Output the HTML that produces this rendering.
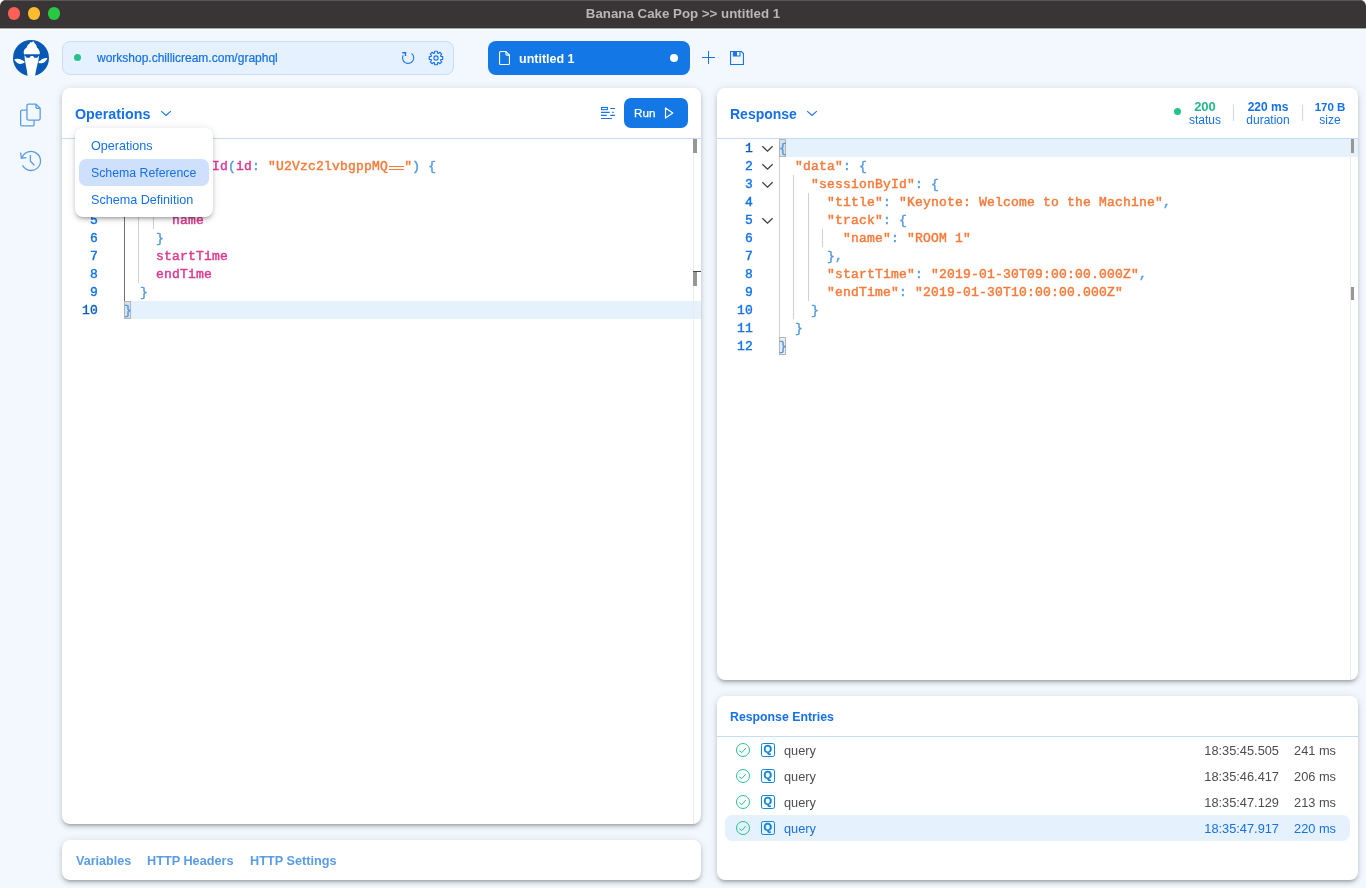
<!DOCTYPE html>
<html>
<head>
<meta charset="utf-8">
<title>Banana Cake Pop</title>
<style>
*{box-sizing:border-box;margin:0;padding:0}
html,body{width:1366px;height:888px;overflow:hidden;background:#fff}
body{font-family:"Liberation Sans",sans-serif;position:relative;color:#1670e6}
.abs{position:absolute}
#win{position:absolute;left:0;top:0;width:1366px;height:888px;background:#f3f8fe;border-radius:6px 6px 0 0;overflow:hidden}
#titlebar{position:absolute;left:0;top:0;width:1366px;height:28px;background:#393537;border-top:1px solid #5b5759}
#titlebar .t{position:absolute;left:0;width:1366px;top:5px;text-align:center;font-weight:700;font-size:13.3px;line-height:16px;color:#b9b5b8;letter-spacing:0}
.tl{position:absolute;top:6.4px;width:12.4px;height:12.4px;border-radius:50%}
#tbline{position:absolute;left:0;top:28px;width:1366px;height:2px;background:linear-gradient(#a9a7a8 0,#a9a7a8 50%,#fafcff 50%,#fafcff 100%)}
.panel{position:absolute;background:#fff;border-radius:8px;box-shadow:0 3px 3px -2px rgba(0,0,0,.2),0 3px 4px 0 rgba(0,0,0,.14),0 1px 8px 0 rgba(0,0,0,.12)}
.hline{position:absolute;height:1px;background:#c4dcfb}
.t{white-space:pre}
.t,.mono,.ln{will-change:transform}
.mono{font-family:"Liberation Mono",monospace;font-size:13px;letter-spacing:0.2px;line-height:18px;white-space:pre;font-weight:400;-webkit-text-stroke:0.45px currentColor;margin-top:0.7px;margin-left:-0.4px}
.ln{position:absolute;text-align:right;font-family:"Liberation Mono",monospace;font-size:13px;letter-spacing:0.2px;line-height:18px;font-weight:400;-webkit-text-stroke:0.38px currentColor;color:#1272e6;margin-top:0.7px}
.f{color:#dc3a90}.s{color:#f67b3b}.p{color:#589ae2}
.guide{position:absolute;width:1px;background:#d0d0d0}
</style>
</head>
<body>
<div id="win">
  <div id="titlebar">
    <div class="tl" style="left:7.8px;background:#fe5f57"></div>
    <div class="tl" style="left:27.8px;background:#febc2e"></div>
    <div class="tl" style="left:47.7px;background:#28c840"></div>
    <div class="t">Banana Cake Pop &gt;&gt; untitled 1</div>
  </div>
  <div id="tbline"></div>

  <!-- TOPBAR -->
  <div id="topbar">
    <!-- logo -->
    <svg class="abs" style="left:12px;top:39px" width="38" height="38" viewBox="0 0 38 38">
      <circle cx="19" cy="19" r="18" fill="#0659b5"/>
      <path d="M21.3 2.1 L19.9 3.5 L18.4 2.9 L17.4 4.7 C15.6 5.6 14.8 7 14.7 8.4 C12.8 9.6 11.8 11.2 11.7 13 C11.6 13.9 11.8 14.6 12.2 15.2 L27.5 15.2 C27.9 14.4 27.9 13.4 27.6 12.4 C27.1 10.8 26.2 9.4 24.9 8.4 C24.8 6.8 24.2 5.4 22.8 4.4 Z" fill="#fff"/>
      <path d="M12.4 15 L27.2 15 L26.6 20.6 C25.4 25.4 24.1 30.6 23 37.3 L19.4 37.3 L19 36.4 L18.6 37.3 L15.7 37.3 C14.9 31 13.7 25.6 12.8 20.8 Z" fill="#fff"/>
      <path d="M12.4 15.2 L27.3 15.2 L27.2 16.9 L26.4 16.9 C26.3 18.1 25.4 18.8 23.9 18.8 C22.4 18.8 21.4 18.1 21.2 16.9 L18.7 16.9 C18.5 18.1 17.6 18.8 16.1 18.8 C14.6 18.8 13.7 18.1 13.5 16.9 L12.5 16.9 Z" fill="#0659b5"/>
      <path d="M2.2 20.6 C4.4 19.4 7.6 19.6 9.8 21 L12.4 22.3 L12.6 23.6 C10.4 25 7.6 25.4 5.6 24.2 C4.2 23.3 3.1 22 2.2 20.6 Z" fill="#fff"/>
      <path d="M35.4 19.2 C33 18.8 30.2 19.8 28.4 21.4 L26.6 22.4 L26.4 23.7 C28.4 24.6 31 24.3 32.7 23 C34 22 34.9 20.7 35.4 19.2 Z" fill="#fff"/>
    </svg>
    <!-- url box -->
    <div class="abs" style="left:62px;top:41px;width:392px;height:34px;background:#e5f1fe;border:1px solid #c6ddfb;border-radius:8px"></div>
    <div class="abs" style="left:74.2px;top:54.3px;width:7.2px;height:7.2px;border-radius:50%;background:#25c28e"></div>
    <div class="abs t" style="left:97px;top:51px;font-size:12px;line-height:14px;color:#1670e6;-webkit-text-stroke:0.2px #1670e6">workshop.chillicream.com/graphql</div>
    <!-- refresh -->
    <svg class="abs" style="left:400px;top:50px" width="16" height="16" viewBox="0 0 16 16" fill="none" stroke="#1a73e8" stroke-width="1.1">
      <path d="M11.6 3.4 A5.6 5.6 0 1 1 3.2 5.2"/>
      <path d="M2.2 2.7 L5.5 2.7 L5.5 6" stroke-linejoin="miter" stroke-width="1.4"/>
    </svg>
    <!-- gear -->
    <svg class="abs" style="left:428px;top:50px" width="16" height="16" viewBox="0 0 16 16" fill="none" stroke="#1a73e8" stroke-width="1.1" id="gear"><path d="M6.49 3.13 L6.63 1.24 L9.37 1.24 L9.51 3.13 L10.38 3.49 L11.81 2.25 L13.75 4.19 L12.51 5.62 L12.87 6.49 L14.76 6.63 L14.76 9.37 L12.87 9.51 L12.51 10.38 L13.75 11.81 L11.81 13.75 L10.38 12.51 L9.51 12.87 L9.37 14.76 L6.63 14.76 L6.49 12.87 L5.62 12.51 L4.19 13.75 L2.25 11.81 L3.49 10.38 L3.13 9.51 L1.24 9.37 L1.24 6.63 L3.13 6.49 L3.49 5.62 L2.25 4.19 L4.19 2.25 L5.62 3.49 Z" stroke-linejoin="round"/><circle cx="8" cy="8" r="2.1"/></svg>
    <!-- tab -->
    <div class="abs" style="left:488px;top:41px;width:202px;height:34px;background:#1477e6;border-radius:8px"></div>
    <svg class="abs" style="left:498px;top:50px" width="14" height="16" viewBox="0 0 14 16" fill="none" stroke="#fff" stroke-width="1.1">
      <path d="M1.55 2.6 Q1.55 1.55 2.6 1.55 L7.9 1.55 L11.45 5.1 L11.45 13.4 Q11.45 14.45 10.4 14.45 L2.6 14.45 Q1.55 14.45 1.55 13.4 Z"/>
      <path d="M7.9 1.55 L7.9 4.1 Q7.9 5.1 8.9 5.1 L11.45 5.1"/>
    </svg>
    <div class="abs t" style="left:519px;top:51.8px;font-size:12.5px;line-height:15px;font-weight:700;color:#fff">untitled 1</div>
    <div class="abs" style="left:670px;top:54px;width:8px;height:8px;border-radius:50%;background:#fff"></div>
    <!-- plus -->
    <div class="abs" style="left:702px;top:57px;width:13px;height:1.2px;background:#1a73e8"></div>
    <div class="abs" style="left:707.9px;top:51px;width:1.2px;height:13px;background:#1a73e8"></div>
    <!-- save -->
    <svg class="abs" style="left:729px;top:50px" width="16" height="16" viewBox="0 0 16 16" fill="none" stroke="#1a73e8" stroke-width="1.1">
      <path d="M1.55 1.55 L12.4 1.55 L14.45 3.6 L14.45 14.45 L1.55 14.45 Z"/>
      <path d="M4.4 1.55 L4.4 6 L11 6 L11 1.55"/>
      <rect x="4.4" y="1.55" width="3.6" height="4.4" fill="#1a73e8" stroke="none"/>
    </svg>
  </div>

  <!-- SIDEBAR -->
  <div id="sidebar">
    <svg class="abs" style="left:19px;top:102px" width="24" height="26" viewBox="0 0 24 26" fill="none" stroke="#5a9de5" stroke-width="1.3">
      <path d="M7.95 3.6 Q7.95 2.05 9.5 2.05 L16.9 2.05 L21.15 6.3 L21.15 16.5 Q21.15 18.05 19.6 18.05 L9.5 18.05 Q7.95 18.05 7.95 16.5 Z"/>
      <path d="M16.9 2.05 L16.9 4.8 Q16.9 6.3 18.4 6.3 L21.15 6.3"/>
      <path d="M7.95 8.05 L3.2 8.05 Q1.65 8.05 1.65 9.6 L1.65 22.4 Q1.65 23.95 3.2 23.95 L13.5 23.95 Q15.05 23.95 15.05 22.4 L15.05 18.05"/>
    </svg>
    <svg class="abs" style="left:19.3px;top:149.1px" width="24" height="24" viewBox="0 0 24 24" fill="none" stroke="#5a9de5" stroke-width="1.3">
      <path d="M3.07 8.75 A9.5 9.5 0 1 1 3.54 16.31"/>
      <path d="M1.6 3.6 L2.4 9.2 L7.4 8.6"/>
      <path d="M11.4 6.1 L11.4 12.2 L15.4 16.3"/>
    </svg>
  </div>

  <!-- LEFT PANEL -->
  <div class="panel" id="ops" style="left:62px;top:88px;width:639px;height:736px">
<div class="abs t" style="left:13.3px;top:18px;font-size:14.3px;line-height:17px;font-weight:700;color:#1670e6">Operations</div>
<svg class="abs" style="left:98px;top:21px" width="12" height="8" viewBox="0 0 12 8" fill="none" stroke="#1a73e8" stroke-width="1.1"><path d="M1.2 2.1 L6 6.5 L10.8 2.1"/></svg>
<svg class="abs" style="left:538px;top:18px" width="16" height="14" viewBox="0 0 16 14" fill="none" stroke="#1a73e8" stroke-width="1.1">
<rect x="1.55" y="1.45" width="5.8" height="2.2"/><path d="M10.3 2.5 L15 2.5 M1 6.4 L9.7 6.4 M12.3 6.4 L13.8 6.4 M1 9.4 L6.8 9.4 M10.3 9.4 L15 9.4 M1 12.5 L12 12.5"/></svg>
<div class="abs" style="left:562px;top:10px;width:64px;height:30px;background:#1477e6;border-radius:7px"></div>
<div class="abs t" style="left:572.4px;top:16.6px;font-size:11.7px;line-height:15px;color:#fff;-webkit-text-stroke:0.25px #fff">Run</div>
<svg class="abs" style="left:602px;top:18px" width="12" height="14" viewBox="0 0 12 14" fill="none" stroke="#fff" stroke-width="1.2" stroke-linejoin="round"><path d="M1.5 1.9 L8.8 7 L1.5 12.1 Z"/></svg>
<div class="hline" style="left:0;top:50px;width:639px"></div>
<div class="abs" style="left:62.5px;top:213px;width:576.5px;height:18px;background:#e5f1fd"></div>
<div class="abs" style="left:631px;top:51px;width:1px;height:685px;background:#ebebeb"></div>
<div class="abs" style="left:631.4px;top:51px;width:3.6px;height:14px;background:#979797"></div>
<div class="abs" style="left:631.4px;top:183px;width:3.6px;height:15px;background:#979797"></div>
<div class="abs" style="left:631.4px;top:182.6px;width:7.6px;height:1.7px;background:#4a4a4a"></div>
<div class="guide" style="left:62px;top:69px;height:162px;background:#707070"></div>
<div class="guide" style="left:76px;top:87px;height:108px"></div>
<div class="guide" style="left:91px;top:123px;height:18px"></div>
<div class="abs" style="left:62px;top:213px;width:7px;height:18px;background:#d5e3ea;border:1px solid #b4b4b4"></div>
<div class="ln" style="left:-3.700000000000003px;width:40px;top:51px;color:#1272e6">1</div>
<div class="ln" style="left:-3.700000000000003px;width:40px;top:69px;color:#1272e6">2</div>
<div class="ln" style="left:-3.700000000000003px;width:40px;top:87px;color:#1272e6">3</div>
<div class="ln" style="left:-3.700000000000003px;width:40px;top:105px;color:#1272e6">4</div>
<div class="ln" style="left:-3.700000000000003px;width:40px;top:123px;color:#1272e6">5</div>
<div class="ln" style="left:-3.700000000000003px;width:40px;top:141px;color:#1272e6">6</div>
<div class="ln" style="left:-3.700000000000003px;width:40px;top:159px;color:#1272e6">7</div>
<div class="ln" style="left:-3.700000000000003px;width:40px;top:177px;color:#1272e6">8</div>
<div class="ln" style="left:-3.700000000000003px;width:40px;top:195px;color:#1272e6">9</div>
<div class="ln" style="left:-3.700000000000003px;width:40px;top:213px;color:#0b5bb9">10</div>
<div class="abs mono" style="left:62.5px;top:51px"><span class="p">{</span></div>
<div class="abs mono" style="left:62.5px;top:69px">  <span class="f">sessionById</span><span class="p">(</span><span class="f">id</span><span class="p">:</span> <span class="s">"U2Vzc2lvbgppMQ<span style="display:inline-block;position:relative;width:16px;height:18px;vertical-align:top;letter-spacing:0"><i style="position:absolute;left:1px;top:7.6px;width:14.4px;height:1.3px;background:#f67b3b"></i><i style="position:absolute;left:1px;top:10.8px;width:14.4px;height:1.3px;background:#f67b3b"></i></span>"</span><span class="p">) {</span></div>
<div class="abs mono" style="left:62.5px;top:87px">    <span class="f">title</span></div>
<div class="abs mono" style="left:62.5px;top:105px">    <span class="f">track</span> <span class="p">{</span></div>
<div class="abs mono" style="left:62.5px;top:123px">      <span class="f">name</span></div>
<div class="abs mono" style="left:62.5px;top:141px">    <span class="p">}</span></div>
<div class="abs mono" style="left:62.5px;top:159px">    <span class="f">startTime</span></div>
<div class="abs mono" style="left:62.5px;top:177px">    <span class="f">endTime</span></div>
<div class="abs mono" style="left:62.5px;top:195px">  <span class="p">}</span></div>
<div class="abs mono" style="left:62.5px;top:213px"><span class="p">}</span></div>
</div>

  <!-- VARIABLES PANEL -->
  <div class="panel" id="vars" style="left:62px;top:840px;width:639px;height:40px">
<div class="abs t" style="left:13.5px;top:14px;font-size:12.6px;line-height:15px;font-weight:700;color:#5b9be4">Variables</div>
<div class="abs t" style="left:85px;top:14px;font-size:12.7px;line-height:15px;font-weight:700;color:#5b9be4">HTTP Headers</div>
<div class="abs t" style="left:188px;top:14px;font-size:12.7px;line-height:15px;font-weight:700;color:#5b9be4">HTTP Settings</div>
</div>

  <!-- RESPONSE PANEL -->
  <div class="panel" id="resp" style="left:717px;top:88px;width:641px;height:592px">
<div class="abs t" style="left:13.4px;top:18px;font-size:14px;line-height:17px;font-weight:700;color:#1670e6">Response</div>
<svg class="abs" style="left:89px;top:21px" width="12" height="8" viewBox="0 0 12 8" fill="none" stroke="#1a73e8" stroke-width="1.1"><path d="M1.2 2.1 L6 6.5 L10.8 2.1"/></svg>
<div class="abs" style="left:457px;top:20px;width:7.4px;height:7.4px;border-radius:50%;background:#25c28e"></div>
<div class="abs t" style="left:447.79999999999995px;width:80px;text-align:center;top:12px;font-size:13px;line-height:14px;font-weight:700;color:#25b888">200</div><div class="abs t" style="left:447.79999999999995px;width:80px;text-align:center;top:25px;font-size:12px;line-height:14px;color:#1670e6">status</div>
<div class="abs" style="left:516px;top:17px;width:1px;height:16px;background:#c4dcfb"></div>
<div class="abs t" style="left:510.70000000000005px;width:80px;text-align:center;top:12px;font-size:12px;line-height:14px;font-weight:700;color:#1670e6">220 ms</div><div class="abs t" style="left:510.70000000000005px;width:80px;text-align:center;top:25px;font-size:12px;line-height:14px;color:#1670e6">duration</div>
<div class="abs" style="left:585px;top:17px;width:1px;height:16px;background:#c4dcfb"></div>
<div class="abs t" style="left:572.7px;width:80px;text-align:center;top:12px;font-size:11.5px;line-height:14px;font-weight:700;color:#1670e6">170 B</div><div class="abs t" style="left:572.7px;width:80px;text-align:center;top:25px;font-size:12px;line-height:14px;color:#1670e6">size</div>
<div class="hline" style="left:0;top:50px;width:641px"></div>
<div class="abs" style="left:62.5px;top:51px;width:578.5px;height:18px;background:#e5f1fd"></div>
<div class="abs" style="left:633px;top:51px;width:1px;height:541px;background:#ebebeb"></div>
<div class="abs" style="left:634px;top:51px;width:3.4px;height:14px;background:#979797"></div>
<div class="abs" style="left:634px;top:198.8px;width:3.4px;height:13.4px;background:#979797"></div>
<div class="guide" style="left:62px;top:69px;height:180px"></div>
<div class="guide" style="left:76px;top:87px;height:144px"></div>
<div class="guide" style="left:91px;top:105px;height:108px"></div>
<div class="guide" style="left:105px;top:141px;height:18px"></div>
<div class="abs" style="left:62px;top:51px;width:7px;height:18px;background:#d5e3ea;border:1px solid #b4b4b4"></div>
<div class="abs" style="left:62px;top:249px;width:7px;height:18px;background:#e9eef1;border:1px solid #b4b4b4"></div>
<div class="ln" style="left:-3.7999999999999545px;width:40px;top:51px;color:#0b5bb9">1</div>
<div class="ln" style="left:-3.7999999999999545px;width:40px;top:69px;color:#1272e6">2</div>
<div class="ln" style="left:-3.7999999999999545px;width:40px;top:87px;color:#1272e6">3</div>
<div class="ln" style="left:-3.7999999999999545px;width:40px;top:105px;color:#1272e6">4</div>
<div class="ln" style="left:-3.7999999999999545px;width:40px;top:123px;color:#1272e6">5</div>
<div class="ln" style="left:-3.7999999999999545px;width:40px;top:141px;color:#1272e6">6</div>
<div class="ln" style="left:-3.7999999999999545px;width:40px;top:159px;color:#1272e6">7</div>
<div class="ln" style="left:-3.7999999999999545px;width:40px;top:177px;color:#1272e6">8</div>
<div class="ln" style="left:-3.7999999999999545px;width:40px;top:195px;color:#1272e6">9</div>
<div class="ln" style="left:-3.7999999999999545px;width:40px;top:213px;color:#1272e6">10</div>
<div class="ln" style="left:-3.7999999999999545px;width:40px;top:231px;color:#1272e6">11</div>
<div class="ln" style="left:-3.7999999999999545px;width:40px;top:249px;color:#1272e6">12</div>
<svg class="abs" style="left:44.0px;top:56.5px" width="13" height="8" viewBox="0 0 13 8" fill="none" stroke="#3a3a3a" stroke-width="1.2"><path d="M1.4 1.3 L6.5 6.2 L11.6 1.3"/></svg>
<svg class="abs" style="left:44.0px;top:74.5px" width="13" height="8" viewBox="0 0 13 8" fill="none" stroke="#3a3a3a" stroke-width="1.2"><path d="M1.4 1.3 L6.5 6.2 L11.6 1.3"/></svg>
<svg class="abs" style="left:44.0px;top:92.5px" width="13" height="8" viewBox="0 0 13 8" fill="none" stroke="#3a3a3a" stroke-width="1.2"><path d="M1.4 1.3 L6.5 6.2 L11.6 1.3"/></svg>
<svg class="abs" style="left:44.0px;top:128.5px" width="13" height="8" viewBox="0 0 13 8" fill="none" stroke="#3a3a3a" stroke-width="1.2"><path d="M1.4 1.3 L6.5 6.2 L11.6 1.3"/></svg>
<div class="abs mono" style="left:62.5px;top:51px"><span class="p">{</span></div>
<div class="abs mono" style="left:62.5px;top:69px">  <span class="s">"data"</span><span class="p">: {</span></div>
<div class="abs mono" style="left:62.5px;top:87px">    <span class="s">"sessionById"</span><span class="p">: {</span></div>
<div class="abs mono" style="left:62.5px;top:105px">      <span class="s">"title"</span><span class="p">:</span> <span class="s">"Keynote: Welcome to the Machine"</span><span class="p">,</span></div>
<div class="abs mono" style="left:62.5px;top:123px">      <span class="s">"track"</span><span class="p">: {</span></div>
<div class="abs mono" style="left:62.5px;top:141px">        <span class="s">"name"</span><span class="p">:</span> <span class="s">"ROOM 1"</span></div>
<div class="abs mono" style="left:62.5px;top:159px">      <span class="p">},</span></div>
<div class="abs mono" style="left:62.5px;top:177px">      <span class="s">"startTime"</span><span class="p">:</span> <span class="s">"2019-01-30T09:00:00.000Z"</span><span class="p">,</span></div>
<div class="abs mono" style="left:62.5px;top:195px">      <span class="s">"endTime"</span><span class="p">:</span> <span class="s">"2019-01-30T10:00:00.000Z"</span></div>
<div class="abs mono" style="left:62.5px;top:213px">    <span class="p">}</span></div>
<div class="abs mono" style="left:62.5px;top:231px">  <span class="p">}</span></div>
<div class="abs mono" style="left:62.5px;top:249px"><span class="p">}</span></div>
</div>

  <!-- ENTRIES PANEL -->
  <div class="panel" id="entries" style="left:717px;top:696px;width:641px;height:184px">
<div class="abs t" style="left:13.4px;top:14.2px;font-size:12.3px;line-height:15px;font-weight:700;color:#1670e6">Response Entries</div>
<div class="hline" style="left:0;top:40px;width:641px"></div>
<svg class="abs" style="left:18px;top:46.1px" width="16" height="16" viewBox="0 0 16 16" fill="none" stroke="#26c28d" stroke-width="1"><circle cx="8" cy="8" r="6.5"/><path d="M4.3 8.7 L6.8 10.6 L10.8 6.1"/></svg>
<div class="abs" style="left:44px;top:47.2px;width:13.8px;height:13.9px;border:1.1px solid #1488d8;border-radius:2.2px"></div>
<div class="abs t" style="left:44px;width:13.8px;text-align:center;top:47.4px;font-size:11px;line-height:13.9px;font-weight:700;color:#0f84d6;-webkit-text-stroke:0.3px #0f84d6">Q</div>
<div class="abs t" style="left:67.3px;top:46.9px;font-size:12.75px;line-height:16px;color:#4d4d4d">query</div>
<div class="abs t" style="left:462.3px;width:100px;text-align:right;top:46.9px;font-size:12.8px;line-height:16px;color:#4d4d4d">18:35:45.505</div>
<div class="abs t" style="left:539px;width:80px;text-align:right;top:46.9px;font-size:12.8px;line-height:16px;color:#4d4d4d">241 ms</div>
<svg class="abs" style="left:18px;top:72.1px" width="16" height="16" viewBox="0 0 16 16" fill="none" stroke="#26c28d" stroke-width="1"><circle cx="8" cy="8" r="6.5"/><path d="M4.3 8.7 L6.8 10.6 L10.8 6.1"/></svg>
<div class="abs" style="left:44px;top:73.2px;width:13.8px;height:13.9px;border:1.1px solid #1488d8;border-radius:2.2px"></div>
<div class="abs t" style="left:44px;width:13.8px;text-align:center;top:73.4px;font-size:11px;line-height:13.9px;font-weight:700;color:#0f84d6;-webkit-text-stroke:0.3px #0f84d6">Q</div>
<div class="abs t" style="left:67.3px;top:72.9px;font-size:12.75px;line-height:16px;color:#4d4d4d">query</div>
<div class="abs t" style="left:462.3px;width:100px;text-align:right;top:72.9px;font-size:12.8px;line-height:16px;color:#4d4d4d">18:35:46.417</div>
<div class="abs t" style="left:539px;width:80px;text-align:right;top:72.9px;font-size:12.8px;line-height:16px;color:#4d4d4d">206 ms</div>
<svg class="abs" style="left:18px;top:98.1px" width="16" height="16" viewBox="0 0 16 16" fill="none" stroke="#26c28d" stroke-width="1"><circle cx="8" cy="8" r="6.5"/><path d="M4.3 8.7 L6.8 10.6 L10.8 6.1"/></svg>
<div class="abs" style="left:44px;top:99.2px;width:13.8px;height:13.9px;border:1.1px solid #1488d8;border-radius:2.2px"></div>
<div class="abs t" style="left:44px;width:13.8px;text-align:center;top:99.4px;font-size:11px;line-height:13.9px;font-weight:700;color:#0f84d6;-webkit-text-stroke:0.3px #0f84d6">Q</div>
<div class="abs t" style="left:67.3px;top:98.9px;font-size:12.75px;line-height:16px;color:#4d4d4d">query</div>
<div class="abs t" style="left:462.3px;width:100px;text-align:right;top:98.9px;font-size:12.8px;line-height:16px;color:#4d4d4d">18:35:47.129</div>
<div class="abs t" style="left:539px;width:80px;text-align:right;top:98.9px;font-size:12.8px;line-height:16px;color:#4d4d4d">213 ms</div>
<div class="abs" style="left:8px;top:118.8px;width:625px;height:26.2px;background:#e5f1fd;border-radius:7.5px"></div>
<svg class="abs" style="left:18px;top:124.1px" width="16" height="16" viewBox="0 0 16 16" fill="none" stroke="#26c28d" stroke-width="1"><circle cx="8" cy="8" r="6.5"/><path d="M4.3 8.7 L6.8 10.6 L10.8 6.1"/></svg>
<div class="abs" style="left:44px;top:125.2px;width:13.8px;height:13.9px;border:1.1px solid #1488d8;border-radius:2.2px"></div>
<div class="abs t" style="left:44px;width:13.8px;text-align:center;top:125.4px;font-size:11px;line-height:13.9px;font-weight:700;color:#0f84d6;-webkit-text-stroke:0.3px #0f84d6">Q</div>
<div class="abs t" style="left:67.3px;top:124.9px;font-size:12.75px;line-height:16px;color:#1670e6">query</div>
<div class="abs t" style="left:462.3px;width:100px;text-align:right;top:124.9px;font-size:12.8px;line-height:16px;color:#1670e6">18:35:47.917</div>
<div class="abs t" style="left:539px;width:80px;text-align:right;top:124.9px;font-size:12.8px;line-height:16px;color:#1670e6">220 ms</div>
</div>

  <!-- DROPDOWN -->
  <div id="dd" class="abs" style="left:75px;top:128px;width:138px;height:89px;background:#fff;border-radius:8px;box-shadow:0 3px 3px -2px rgba(0,0,0,.2),0 3px 4px 0 rgba(0,0,0,.14),0 1px 8px 0 rgba(0,0,0,.12)">
    <div class="abs" style="left:4px;top:31px;width:130px;height:27px;background:#cfe0fc;border-radius:7px"></div>
    <div class="abs t" style="left:16.2px;top:11.2px;font-size:12.6px;line-height:15px;color:#1670e6">Operations</div>
    <div class="abs t" style="left:16.2px;top:38px;font-size:12.3px;line-height:15px;color:#1670e6">Schema Reference</div>
    <div class="abs t" style="left:16.2px;top:65px;font-size:12.6px;line-height:15px;color:#1670e6">Schema Definition</div>
  </div>
</div>
</body>
</html>
